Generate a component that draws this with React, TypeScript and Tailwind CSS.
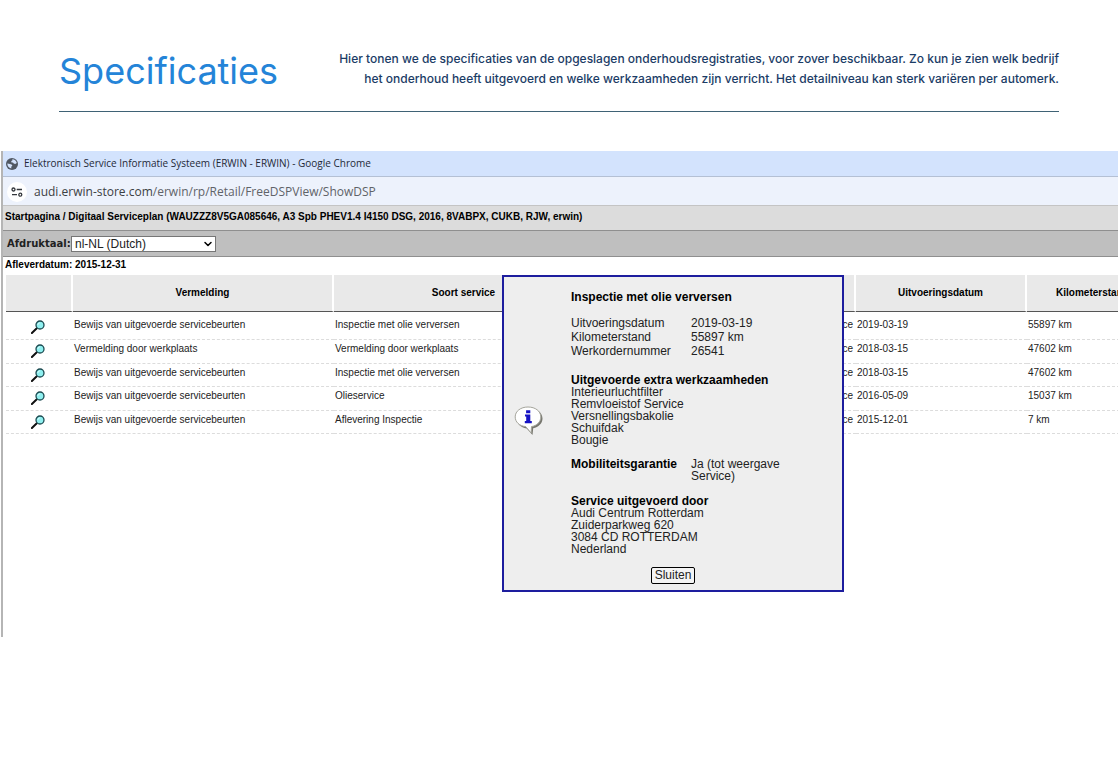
import { useState } from 'react';
import { ChevronDown } from 'lucide-react';

const ROWS = [
  { entry: 'Bewijs van uitgevoerde servicebeurten', service: 'Inspectie met olie verversen', date: '2019-03-19', km: '55897 km' },
  { entry: 'Vermelding door werkplaats', service: 'Vermelding door werkplaats', date: '2018-03-15', km: '47602 km' },
  { entry: 'Bewijs van uitgevoerde servicebeurten', service: 'Inspectie met olie verversen', date: '2018-03-15', km: '47602 km' },
  { entry: 'Bewijs van uitgevoerde servicebeurten', service: 'Olieservice', date: '2016-05-09', km: '15037 km' },
  { entry: 'Bewijs van uitgevoerde servicebeurten', service: 'Aflevering Inspectie', date: '2015-12-01', km: '7 km' },
];

const DETAILS = [
  ['Uitvoeringsdatum', '2019-03-19'],
  ['Kilometerstand', '55897 km'],
  ['Werkordernummer', '26541'],
];

const EXTRA_WORK = ['Interieurluchtfilter', 'Remvloeistof Service', 'Versnellingsbakolie', 'Schuifdak', 'Bougie'];

const DEALER = ['Audi Centrum Rotterdam', 'Zuiderparkweg 620', '3084 CD ROTTERDAM', 'Nederland'];

function GlobeIcon() {
  return (
    <svg className="h-3 w-3 shrink-0" viewBox="0 0 12 12" aria-hidden="true">
      <circle cx="6" cy="6" r="6" fill="#505863" />
      <path d="M1.300 5.500 4 5.900l2 .8.3 1.200-1 .6v1.900C2.800 10 1.300 8.200 1.300 5.500z" fill="#d3e3fd" />
      <path d="M6.300 1.200c2.200.1 4 1.600 4.500 3.800l-1.600.9-1.500-.3-.7-1-1.500-.2-.3-1.300 1.200-.7z" fill="#d3e3fd" />
    </svg>
  );
}

function TuneIcon() {
  return (
    <svg className="h-3 w-3" viewBox="0 0 12 12" fill="none" stroke="#33373c" strokeWidth="1.3" aria-hidden="true">
      <circle cx="2.500" cy="3.500" r="1.500" />
      <path d="M5.700 3.500H11M1 8.700h5" />
      <circle cx="9.300" cy="8.700" r="1.500" />
    </svg>
  );
}

function MagnifierIcon() {
  return (
    <svg className="h-[14px] w-[14px]" viewBox="0 0 14 14" aria-hidden="true">
      <path d="M5.800 8.200.9 13" stroke="#111" strokeWidth="2" strokeLinecap="round" />
      <circle cx="9" cy="5" r="4" fill="#8ff0f0" stroke="#1c4a50" strokeWidth="1.300" />
      <path d="M6.900 4.800c.2-1.200.9-1.800 2-1.900" stroke="#e4ffff" strokeWidth="1" fill="none" />
    </svg>
  );
}

function InfoIcon() {
  return (
    <svg className="h-[30px] w-[30px]" viewBox="0 0 30 30" aria-hidden="true">
      <path d="M15.500 2.500c7.500 0 13 4.200 13 10 0 5-4 8.700-9.300 9.700L18.500 29l-5.700-6.600C6.500 21.800 3 17.800 3 12.800z" fill="#77776f" />
      <path d="M14 1c7.400 0 12.800 4.200 12.800 9.900 0 5-4 8.800-9.300 9.700l-.4 6.400-5.400-6.400C5.400 20 1.200 16 1.200 10.900 1.200 5.200 6.600 1 14 1z" fill="#fff" stroke="#a5a59c" strokeWidth="1" />
      <path d="M12.100 4.300h4.200v2.900h-4.200zM11 8.500h5.300v6.500h1.500v2.200H10.800V15h1.400v-4.500H11z" fill="#1612c4" />
    </svg>
  );
}

function ServiceDialog({ onClose }: { onClose: () => void }) {
  return (
    <div
      role="dialog"
      aria-labelledby="dialog-title"
      className="absolute left-[499px] top-[124px] flex w-[342px] border-2 border-[#1d1d9e] bg-[#eee] text-[12px] text-[#222]"
    >
      <div className="flex w-[67px] shrink-0 pl-2.5 pt-[129px]">
        <InfoIcon />
      </div>
      <div className="flex-1 pt-[13px] leading-3">
        <h2 id="dialog-title" className="font-bold leading-[14px] text-black">Inspectie met olie verversen</h2>
        <dl className="mt-3 grid grid-cols-[120px_1fr] leading-[14px]">
          {DETAILS.map(([label, value]) => (
            <div key={label} className="contents">
              <dt>{label}</dt>
              <dd>{value}</dd>
            </div>
          ))}
        </dl>
        <h3 className="mt-4 font-bold text-black">Uitgevoerde extra werkzaamheden</h3>
        <ul>
          {EXTRA_WORK.map((item) => (
            <li key={item}>{item}</li>
          ))}
        </ul>
        <dl className="mt-3 grid grid-cols-[120px_110px]">
          <dt className="font-bold text-black">Mobiliteitsgarantie</dt>
          <dd>Ja (tot weergave Service)</dd>
        </dl>
        <h3 className="mt-[13px] font-bold text-black">Service uitgevoerd door</h3>
        <address className="not-italic">
          {DEALER.map((line) => (
            <div key={line}>{line}</div>
          ))}
        </address>
        <button
          type="button"
          onClick={onClose}
          className="mb-1.5 ml-20 mt-3 block h-[17px] w-11 rounded-[2px] border border-black bg-[#f4f4f4] text-center leading-[15px]"
        >
          Sluiten
        </button>
      </div>
    </div>
  );
}

export default function App() {
  const [open, setOpen] = useState(true);

  return (
    <div className="min-h-screen overflow-hidden bg-white">
      <header className="mx-[59px] flex h-28 items-start justify-between border-b border-[#3f6275] pt-[49px]">
        <h1 className="font-[Inter,sans-serif] text-[36px] leading-[44px] text-[#2484d8]">Specificaties</h1>
        <p className="text-right font-[Inter,sans-serif] text-[12px] font-medium leading-5 text-[#1b3c66]">
          Hier tonen we de specificaties van de opgeslagen onderhoudsregistraties, voor zover beschikbaar. Zo kun je zien welk bedrijf
          <br />
          het onderhoud heeft uitgevoerd en welke werkzaamheden zijn verricht. Het detailniveau kan sterk variëren per automerk.
        </p>
      </header>

      <main className="relative ml-px mt-[39px] min-h-[486px] overflow-hidden border-l-2 border-[#b5b5b5] font-['Liberation_Sans',Arial,sans-serif]">
        <div className="flex h-[26px] items-center gap-1.5 border-b border-[#b4c0d4] bg-[#d3e3fd] pl-[3px] font-['Open_Sans',sans-serif] text-[10px] text-[#1f2937]">
          <GlobeIcon />
          <span>Elektronisch Service Informatie Systeem (ERWIN - ERWIN) - Google Chrome</span>
        </div>
        <div className="flex h-7 items-center gap-[7px] bg-[#edf2fc] pl-1 pt-px font-['Open_Sans',sans-serif] text-[12px] text-[#5f6368]">
          <span className="flex h-5 w-5 items-center justify-center rounded-full bg-white">
            <TuneIcon />
          </span>
          <span>
            <span className="text-[#3c4043]">audi.erwin-store.com</span>/erwin/rp/Retail/FreeDSPView/ShowDSP
          </span>
        </div>
        <div className="h-[25px] border-t border-[#c4c4c4] bg-[#dcdcdc] pl-0.5 pt-1 text-[10px] font-bold leading-[14px] text-black">
          Startpagina / Digitaal Serviceplan (WAUZZZ8V5GA085646, A3 Spb PHEV1.4 I4150 DSG, 2016, 8VABPX, CUKB, RJW, erwin)
        </div>
        <div className="flex h-[27px] items-center border-y border-[#8f8f8f] bg-[#bfbfbf] pl-1">
          <label
            htmlFor="print-language"
            className="w-[64px] whitespace-nowrap font-['DejaVu_Sans',Verdana,sans-serif] text-[10px] font-bold text-[#222]"
          >
            Afdruktaal:
          </label>
          <div className="relative flex">
            <select
              id="print-language"
              defaultValue="nl-NL"
              className="h-4 w-[145px] appearance-none border border-[#767676] bg-white pl-[3px] text-[12px] leading-[14px] text-[#222]"
            >
              <option value="nl-NL">nl-NL (Dutch)</option>
            </select>
            <ChevronDown className="pointer-events-none absolute right-0.5 top-0.5 h-3 w-3 text-black" strokeWidth={3} />
          </div>
        </div>
        <p className="pl-0.5 text-[10px] font-bold leading-[15px] text-black">Afleverdatum: 2015-12-31</p>

        <table className="ml-[3px] mt-[3px] w-[1154px] table-fixed border-separate border-spacing-0 text-[10px] leading-3 text-[#222]">
          <colgroup>
            <col className="w-[67px]" />
            <col className="w-[261px]" />
            <col className="w-[261px]" />
            <col className="w-[261px]" />
            <col className="w-[171px]" />
            <col className="w-[133px]" />
          </colgroup>
          <thead>
            <tr className="h-[37px] bg-[#e9e9e9] text-black [&>th]:border-b [&>th]:border-r-2 [&>th]:border-b-[#555] [&>th]:border-r-white [&>th]:p-0">
              <th />
              <th>Vermelding</th>
              <th>Soort service</th>
              <th />
              <th>Uitvoeringsdatum</th>
              <th>Kilometerstand</th>
            </tr>
          </thead>
          <tbody>
            {ROWS.map((row, i) => (
              <tr
                key={i}
                className={`align-top [&>td]:border-b [&>td]:border-dashed [&>td]:border-[#dcdcdc] [&>td]:pl-px ${
                  i === 0 ? 'h-7 [&>td]:pt-[7px]' : 'even:h-6 odd:h-[23px] [&>td]:pt-[3px]'
                }`}
              >
                <td>
                  <button type="button" aria-label={row.service} onClick={() => setOpen(true)} className="ml-6 mt-px block">
                    <MagnifierIcon />
                  </button>
                </td>
                <td>{row.entry}</td>
                <td>{row.service}</td>
                <td className="pr-[3px] text-right">ce</td>
                <td>{row.date}</td>
                <td>{row.km}</td>
              </tr>
            ))}
          </tbody>
        </table>

        {open && <ServiceDialog onClose={() => setOpen(false)} />}
      </main>
    </div>
  );
}
